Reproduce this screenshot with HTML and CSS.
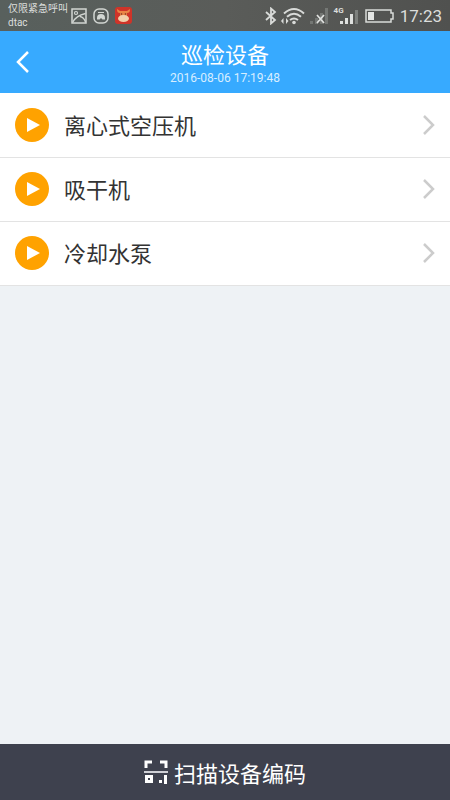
FILE: index.html
```html
<!DOCTYPE html>
<html lang="zh-CN">
<head>
<meta charset="utf-8">
<meta name="viewport" content="width=device-width, initial-scale=1">
<title>巡检设备</title>
<link rel="stylesheet" href="styles.css">
</head>
<body>
<div class="status">
  <div class="carrier"><span>仅限紧急呼叫</span><span>dtac</span></div>
  <div class="notices">
    <svg width="16" height="16" viewBox="0 0 16 16" fill="none" stroke="#d2d6d2" stroke-width="1.5" aria-hidden="true"><rect x="1" y="1" width="14" height="14"/><circle cx="5" cy="5" r="1.500" stroke-width="1.200"/><path d="M1.500 14.500C4 9.500 8 7 14.500 5.500M9 8.500c2.500.5 4.500 2.500 5.500 5.500" stroke-width="1.300"/></svg>
    <svg width="16" height="16" viewBox="0 0 16 16" fill="none" stroke="#d2d6d2" stroke-width="1.5" aria-hidden="true"><rect x="1" y="1" width="14" height="14" rx="5"/><path d="M5 4.500h6" stroke-width="1"/><path d="M4 11.500V10a4 4 0 0 1 8 0v1.500H9.500L8 10l-1.500 1.500z" fill="#d2d6d2" stroke="none"/></svg>
    <svg width="17" height="17" viewBox="0 0 17 17" aria-hidden="true"><rect width="17" height="17" rx="3" fill="#cf3429"/><path d="M2 2c0 3 1 4 3 4l0 4h7V6c2 0 3-1 3-4l-3 2H5z" fill="#e98545"/><ellipse cx="8.500" cy="11.500" rx="5.500" ry="3.500" fill="#f2cfaa"/><circle cx="6.500" cy="7" r=".8" fill="#7b2a20"/><circle cx="10.500" cy="7" r=".8" fill="#7b2a20"/></svg>
  </div>
  <div class="signals">
    <svg width="12" height="18" viewBox="0 0 12 18" fill="none" stroke="#d9dbd9" stroke-width="1.8" aria-hidden="true"><path d="M1 5l9 8-4 3.500v-15L10 5l-9 8"/></svg>
    <svg width="24" height="18" viewBox="0 0 24 18" fill="none" stroke="#d9dbd9" stroke-width="2" aria-hidden="true"><path d="M3 6.500q10-9 20 0M6 9.800q7-6 14 0M9 13q4-3 8 0"/><circle cx="13" cy="15.500" r="1.800" fill="#d9dbd9" stroke="none"/><path d="M0 14l2.500-3v6zM7.500 14L5 11v6z" fill="#d9dbd9" stroke="none"/></svg>
    <svg width="20" height="18" viewBox="0 0 20 18" aria-hidden="true"><path d="M1 14h3v3H1zM6 11h3v6H6zM11 6h3v11h-3zM16 1h3v16h-3z" fill="#747774"/><path d="M8 8l7 8M15 8l-7 8" stroke="#e0e2e0" stroke-width="1.700"/></svg>
    <div class="mobile">
      <span>4G</span>
      <svg width="19" height="16" viewBox="0 0 19 16" aria-hidden="true"><path d="M0 12h3v3H0zM5 9h3v6H5zM10 5h3v10h-3z" fill="#dfe1df"/><path d="M15 1h3v14h-3z" fill="#7d807d"/></svg>
    </div>
    <svg width="29" height="14" viewBox="0 0 29 14" aria-hidden="true"><path d="M1 1h25v3h2v6h-2v3H1z" fill="none" stroke="#d9dbd9" stroke-width="1.500"/><path d="M3 3h6v8H3z" fill="#e4e6e4"/></svg>
    <time>17:23</time>
  </div>
</div>
<header class="top">
  <button class="back" type="button" aria-label="返回"><svg width="16" height="24" viewBox="0 0 16 24" fill="none" stroke="#fff" stroke-width="2.500" aria-hidden="true"><path d="M13 2L3 12l10 10"/></svg></button>
  <div class="heading">
    <h1>巡检设备</h1>
    <time>2016-08-06 17:19:48</time>
  </div>
</header>
<main>
  <ul class="list">
    <li><a href="#compressor"><svg class="play" viewBox="0 0 34 34" aria-hidden="true"><circle cx="17" cy="17" r="17" fill="#ffa200"/><path d="M12 10l13 7-13 7z" fill="#fff"/></svg><span>离心式空压机</span><svg class="chevron" viewBox="0 0 14 22" aria-hidden="true"><path d="M2 2l9 9-9 9"/></svg></a></li>
    <li><a href="#dryer"><svg class="play" viewBox="0 0 34 34" aria-hidden="true"><circle cx="17" cy="17" r="17" fill="#ffa200"/><path d="M12 10l13 7-13 7z" fill="#fff"/></svg><span>吸干机</span><svg class="chevron" viewBox="0 0 14 22" aria-hidden="true"><path d="M2 2l9 9-9 9"/></svg></a></li>
    <li><a href="#pump"><svg class="play" viewBox="0 0 34 34" aria-hidden="true"><circle cx="17" cy="17" r="17" fill="#ffa200"/><path d="M12 10l13 7-13 7z" fill="#fff"/></svg><span>冷却水泵</span><svg class="chevron" viewBox="0 0 14 22" aria-hidden="true"><path d="M2 2l9 9-9 9"/></svg></a></li>
  </ul>
</main>
<button class="scan" type="button">
  <svg width="24" height="24" viewBox="0 0 24 24" aria-hidden="true"><path d="M2 8V2h6M16 2h6v6" fill="none" stroke="#fff" stroke-width="3"/><path d="M0 11h24v2H0z" fill="#cfd0d6"/><path d="M2.500 16.500h5v5h-5z" fill="none" stroke="#fff" stroke-width="3"/><path d="M20 15h3v9h-3zM15 20h3v3h-3z" fill="#fff"/></svg>
  <span>扫描设备编码</span>
</button>
</body>
</html>
```
FILE: styles.css
```css
* {
  box-sizing: border-box;
}

body {
  margin: 0;
  min-height: 100vh;
  display: flex;
  flex-direction: column;
  background: #eef2f5;
  color: #333;
  font-family: Roboto, "Noto Sans CJK SC", sans-serif;
}

svg {
  display: block;
  flex: none;
}

button {
  border: 0;
  padding: 0;
  color: #fff;
  font-family: inherit;
}

.status {
  display: flex;
  align-items: center;
  height: 31px;
  padding: 0 8px;
  background: linear-gradient(90deg, #58605d, #5a5c59 50%, #50514f);
  color: #dcdedc;
}

.carrier {
  display: flex;
  flex-direction: column;
  font-size: 10px;
  line-height: 14px;
  white-space: nowrap;
}

.notices {
  display: flex;
  align-items: center;
  gap: 6px;
  margin-left: 3px;
}

.signals {
  display: flex;
  align-items: center;
  gap: 6px;
  margin-left: auto;
}

.signals svg + svg {
  margin-left: -2px;
}

.mobile {
  display: flex;
  align-items: flex-start;
  margin-left: -1px;
}

.mobile span {
  font-size: 8px;
  font-weight: 700;
  line-height: 8px;
}

.mobile svg {
  margin: 2px 0 0 -4px;
}

.signals time {
  font-size: 17px;
  line-height: 24px;
}

.top {
  display: grid;
  grid-template-columns: 48px 1fr 48px;
  align-items: center;
  height: 62px;
  background: #37aaff;
  color: #fff;
}

.back {
  display: flex;
  align-items: center;
  height: 48px;
  padding-left: 15px;
  background: none;
}

.heading {
  display: flex;
  flex-direction: column;
  align-items: center;
  padding-top: 4px;
}

.heading h1 {
  margin: 0;
  font-size: 22px;
  font-weight: 400;
  line-height: 28px;
}

.heading time {
  font-size: 12px;
  line-height: 16px;
  color: #d7eeff;
}

main {
  flex: 1;
}

.list {
  margin: 0;
  padding: 0;
  border-top: 1px solid #fff;
  list-style: none;
}

.list a {
  display: flex;
  align-items: center;
  height: 63px;
  padding: 0 14px 1px 15px;
  background: #fff;
  color: inherit;
  font-size: 22px;
  text-decoration: none;
}

.list li {
  border-bottom: 1px solid #e3e3e3;
}

.list span {
  flex: 1;
  margin-left: 15px;
  padding-bottom: 2px;
}

.play {
  width: 34px;
  height: 34px;
}

.chevron {
  width: 14px;
  height: 22px;
  fill: none;
  stroke: #ccc;
  stroke-width: 2.5;
}

.scan {
  display: flex;
  align-items: center;
  justify-content: center;
  gap: 6px;
  height: 56px;
  background: #3e414e;
  font-size: 22px;
}
```
